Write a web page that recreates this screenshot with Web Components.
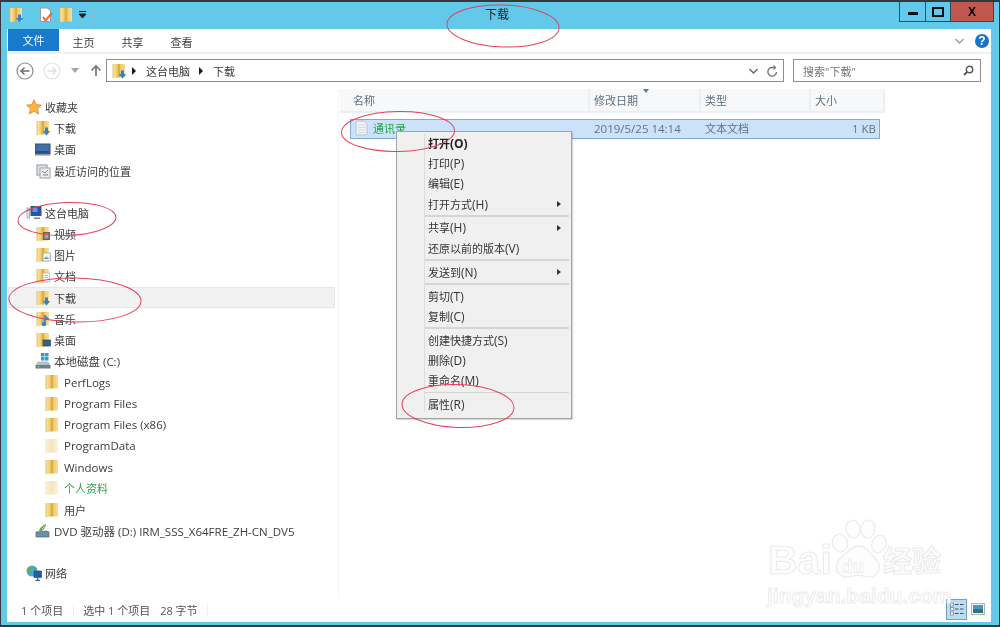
<!DOCTYPE html>
<html lang="zh-CN">
<head>
<meta charset="utf-8">
<title>下载</title>
<style>
  html, body { margin: 0; height: 100%; overflow: hidden; background: #63c9ea; }
  body { font: 11px "Open Sans", "Noto Sans CJK SC", sans-serif; color: #3c3c3c; }
</style>
</head>
<body>

<x-window>
  <x-titlebar slot="title">下载</x-titlebar>
  <x-ribbon slot="ribbon"></x-ribbon>
  <x-addressbar slot="address"></x-addressbar>

  <x-navpane slot="nav">
    <x-nav-item icon="star">收藏夹</x-nav-item>
    <x-nav-item level="1" icon="download">下载</x-nav-item>
    <x-nav-item level="1" icon="desktop">桌面</x-nav-item>
    <x-nav-item level="1" icon="recent">最近访问的位置</x-nav-item>
    <x-nav-item></x-nav-item>
    <x-nav-item icon="pc">这台电脑</x-nav-item>
    <x-nav-item level="1" icon="video">视频</x-nav-item>
    <x-nav-item level="1" icon="picture">图片</x-nav-item>
    <x-nav-item level="1" icon="doc">文档</x-nav-item>
    <x-nav-item level="1" icon="download" selected>下载</x-nav-item>
    <x-nav-item level="1" icon="music">音乐</x-nav-item>
    <x-nav-item level="1" icon="deskfolder">桌面</x-nav-item>
    <x-nav-item level="1" icon="disk" latin>本地磁盘 (C:)</x-nav-item>
    <x-nav-item level="2" icon="folder" latin>PerfLogs</x-nav-item>
    <x-nav-item level="2" icon="folder" latin>Program Files</x-nav-item>
    <x-nav-item level="2" icon="folder" latin>Program Files (x86)</x-nav-item>
    <x-nav-item level="2" icon="paler" latin>ProgramData</x-nav-item>
    <x-nav-item level="2" icon="folder" latin>Windows</x-nav-item>
    <x-nav-item level="2" icon="paler" green>个人资料</x-nav-item>
    <x-nav-item level="2" icon="folder">用户</x-nav-item>
    <x-nav-item level="1" icon="dvd" latin>DVD 驱动器 (D:) IRM_SSS_X64FRE_ZH-CN_DV5</x-nav-item>
    <x-nav-item></x-nav-item>
    <x-nav-item icon="net">网络</x-nav-item>
  </x-navpane>

  <x-filelist slot="files"></x-filelist>
  <x-statusbar slot="status"></x-statusbar>
</x-window>

<script>
const FOLDER = (pale = false, extra = '') => `
  <defs><linearGradient id="f" x1="0" x2="1" y1="0" y2="0">
    ${pale
      ? '<stop offset="0" stop-color="#faf2d8"/><stop offset=".5" stop-color="#f3e6bd"/><stop offset="1" stop-color="#fbf4de"/>'
      : '<stop offset="0" stop-color="#f9e9b0"/><stop offset=".3" stop-color="#f2cf72"/><stop offset=".52" stop-color="#d7a436"/><stop offset=".62" stop-color="#f0c965"/><stop offset="1" stop-color="#f8e199"/>'}
  </linearGradient></defs>
  <path d="M2 1h12v13.500H8L2 15z" fill="url(#f)"/>
  <path d="M2 15.300V1" stroke="${pale ? '#eee2bd' : '#dcb354'}" stroke-width=".8"/>
  ${extra}`;

const ICONS = {
  folder: FOLDER(),
  paler: FOLDER(true),
  download: FOLDER(false, '<path d="M10 7.500h3v3.500h2.200L11.500 15.500 7.800 11H10z" fill="#2d84d2"/>'),
  video: FOLDER(false, '<rect x="8" y="6" width="7" height="8" fill="#5b6670"/><rect x="9.500" y="7.500" width="4" height="5" fill="#9aa7b2"/>'),
  picture: FOLDER(false, '<rect x="8" y="6" width="7.500" height="8" fill="#eef3f6" stroke="#8fa0ac" stroke-width=".7"/><path d="M9 12l2-2.500 3.500 2.500z" fill="#5b9f90"/>'),
  doc: FOLDER(false, '<rect x="8" y="5" width="6.500" height="9" fill="#f3f7fa" stroke="#a9b7c2" stroke-width=".7"/><path d="M9.500 7.500h3.500M9.500 9.500h3.500" stroke="#8cb3d3" stroke-width=".8"/>'),
  music: FOLDER(false, '<path d="M10 4v9" stroke="#2d84d2" stroke-width="1.600"/><circle cx="9" cy="13" r="2.200" fill="#2d84d2"/><path d="M10.500 4.500l4 3.500-4 1.500z" fill="#2d84d2"/>'),
  deskfolder: FOLDER(false, '<rect x="8" y="8" width="7.500" height="6" fill="#2a6296" stroke="#364b5f" stroke-width=".7"/>'),
  star: `<path d="M8 .8l2.200 4.800 5.200.6-3.900 3.500 1.100 5.200L8 12.300l-4.600 2.600 1.100-5.200L.6 6.200l5.200-.6z" fill="#f8b63c" stroke="#e9863a" stroke-width=".9"/>`,
  desktop: `<rect x="0" y="3" width="15" height="10" fill="#3f6fae" stroke="#384b63"/><rect x="1" y="10" width="13" height="2" fill="#2a4f80"/><path d="M0 14h15" stroke="#7a8b9c"/>`,
  recent: `<rect x="2" y="2" width="10" height="10" fill="#dfe4e8" stroke="#8c969e"/><rect x="5" y="5" width="10" height="10" fill="#eef0f2" stroke="#9aa3aa"/><path d="M7 8l3 2 3-3M8 12h5" stroke="#75828c" fill="none"/>`,
  pc: `<rect x="5" y="1.500" width="10" height="9" fill="#1d55b0" stroke="#40566c"/><rect x="6.500" y="3" width="5" height="4" fill="#5e97dd"/><path d="M8 12.500h6v1.500H8z" fill="#73818c"/><rect x="1" y="3" width="2.500" height="10" fill="#e3e6e8" stroke="#8a959d" stroke-width=".7"/><path d="M1.500 5h1.500" stroke="#3ea860"/>`,
  disk: `<rect x="6" y="0" width="3.500" height="3.500" fill="#29a0dc"/><rect x="10" y="0" width="3.500" height="3.500" fill="#29a0dc"/><rect x="6" y="4" width="3.500" height="3.500" fill="#29a0dc"/><rect x="10" y="4" width="3.500" height="3.500" fill="#29a0dc"/><path d="M3 8.500h10l2.500 3.500H.5z" fill="#b6c0c7"/><rect x=".5" y="12" width="15" height="3.500" fill="#6f7f88"/><path d="M2 13.700h3" stroke="#49d47a"/>`,
  dvd: `<path d="M1 9l10-1 3 1v5H1z" fill="#6b8fa8" stroke="#50646f" stroke-width=".7"/><path d="M4 8c1-4 5-6 7-7 0 3-2 6-5 7z" fill="#49ad48"/><path d="M7 6c1-1 2-2 3-2.500" stroke="#d7efc8" fill="none"/>`,
  net: `<circle cx="6" cy="6" r="5.500" fill="#4aa6dc"/><path d="M2 3c2 0 3 1 3 2.500S3 8 2.500 9M7 1c1 2 3 2 4 3-1 2-3 1-3.500 3" fill="#5cb04a" stroke="#5cb04a"/><rect x="8" y="6" width="7.500" height="6.500" fill="#1f5cb3" stroke="#3a4d60" stroke-width=".7"/><path d="M11.700 12.500v2.500M9.500 15.300h4.500" stroke="#50606c" stroke-width="1.200"/>`
};

// small helper so every part gets its own shadow root from a string
class ShadowEl extends HTMLElement {
  constructor() {
    super();
    this.attachShadow({mode: "open"});
  }
  connectedCallback() {
    this.shadowRoot.innerHTML = this.render();
  }
}

class XIcon extends ShadowEl {
  render() {
    const s = this.getAttribute("size") || 16;
    return `<style>:host{display:inline-block;width:${s}px;height:${s}px;flex:none}svg{display:block}</style>
      <svg width="${s}" height="${s}" viewBox="0 0 16 16">${ICONS[this.getAttribute("name")] || ""}</svg>`;
  }
}

class XWindow extends ShadowEl {
  render() {
    return `<style>
      :host { display: block; position: relative; width: 1000px; height: 627px; box-sizing: border-box;
        background: #63c9ea; border: solid #34393c; border-width: 2px 1px 2px 1px; filter: blur(.4px); }
      .shell { display: flex; flex-direction: column; height: 100%; }
      .client { flex: 1; display: flex; flex-direction: column; min-height: 0; margin: 0 8px 0 6px; background: #fff; }
      .middle { flex: 1; display: flex; min-height: 0; }
      .bottom { height: 3px; flex: none; }
    </style>
    <div class="shell">
      <slot name="title"></slot>
      <div class="client">
        <slot name="ribbon"></slot>
        <slot name="address"></slot>
        <div class="middle"><slot name="nav"></slot><slot name="files"></slot></div>
        <slot name="status"></slot>
      </div>
      <div class="bottom"></div>
    </div>
    <x-menu></x-menu>
    <x-watermark></x-watermark>
    <x-annotations></x-annotations>`;
  }
}

class XTitlebar extends ShadowEl {
  render() {
    return `<style>
      :host { display: block; height: 27px; flex: none; position: relative; }
      .bar { display: flex; align-items: flex-start; height: 100%; padding-left: 7px; }
      .qa { display: flex; align-items: center; height: 26px; }
      .sep { width: 1px; height: 11px; background: #8db9c9; }
      .title { position: absolute; left: 446px; width: 100px; text-align: center; top: 4px; font-size: 12px; color: #222; line-height: 18px; }
      .btns { margin-left: auto; margin-right: 5px; display: flex; height: 20px; border: 1px solid #2f4b58; border-top: 0; box-sizing: border-box; }
      .btns div { display: flex; align-items: center; justify-content: center; border-left: 1px solid #2f4b58; width: 24px; }
      .btns div:first-child { border-left: 0; width: 25px; }
      .btns .close { width: 42px; background: #c0584f; font: bold 12px "Liberation Sans", sans-serif; color: #000; }
      i { display: block; }
      .min { width: 10px; height: 3px; background: #111; margin-top: 4px; }
      .max { width: 8px; height: 6px; border: 2px solid #111; }
    </style>
    <div class="bar">
      <div class="qa">
        <x-icon name="download"></x-icon>
        <span class="sep" style="margin-left:5px"></span>
        <svg style="margin-left:9px" width="15" height="16" viewBox="0 0 15 16"><path d="M1.500 1h7l3 3v10.500h-10z" fill="#fff" stroke="#9b9b9b"/><path d="M4 10l2.500 3.500L13 6" stroke="#e8673f" stroke-width="2" fill="none"/></svg>
        <x-icon name="folder" style="margin-left:4px"></x-icon>
        <svg style="margin-left:4px" width="9" height="8" viewBox="0 0 9 8"><path d="M1 .5h7M1 3h7L4.500 7z" stroke="#222" fill="#222"/></svg>
        <span class="sep" style="margin-left:7px"></span>
      </div>
      <div class="title"><slot></slot></div>
      <div class="btns">
        <div><i class="min"></i></div>
        <div><i class="max"></i></div>
        <div class="close">X</div>
      </div>
    </div>`;
  }
}

class XRibbon extends ShadowEl {
  render() {
    return `<style>
      :host { display: block; flex: none; height: 23px; border-bottom: 2px solid #f0f0f0; }
      .tabs { display: flex; height: 100%; align-items: stretch; padding-left: 1px; }
      .file { width: 51px; height: 22px; background: #1979ca; color: #fff; display: flex; align-items: center; justify-content: center; }
      .tab { width: 49px; display: flex; align-items: center; justify-content: center; padding-top: 2px; box-sizing: border-box; }
      .right { margin-left: auto; display: flex; align-items: center; gap: 11px; padding-right: 2px; }
      .help { width: 14px; height: 14px; border-radius: 50%; background: #1a74c6; color: #fff; font: bold 12px/14px "Liberation Sans", sans-serif; text-align: center; }
    </style>
    <div class="tabs">
      <div class="file">文件</div>
      <div class="tab">主页</div>
      <div class="tab">共享</div>
      <div class="tab">查看</div>
      <div class="right">
        <svg width="9" height="6" viewBox="0 0 9 6"><path d="M.5 1l4 4 4-4" fill="none" stroke="#9a9a9a" stroke-width="1.300"/></svg>
        <div class="help">?</div>
      </div>
    </div>`;
  }
}

class XAddressbar extends ShadowEl {
  render() {
    return `<style>
      :host { display: block; flex: none; padding-top: 5px; box-sizing: border-box; height: 35px; }
      .row { display: flex; align-items: center; height: 23px; }
      .nav { width: 99px; flex: none; display: flex; align-items: center; padding-left: 9px; box-sizing: border-box; }
      .nav svg { display: block; }
      .box { height: 23px; box-sizing: border-box; border: 1px solid #8e8e8e; display: flex; align-items: center; background: #fff; }
      .path { width: 678px; margin-right: 9px; padding-left: 4px; }
      .arrow { width: 0; height: 0; border: 4px solid transparent; border-left: 4px solid #1a1a1a; border-right: 0; }
      .end { margin-left: auto; display: flex; align-items: center; gap: 9px; padding-right: 5px; }
      .search { width: 188px; padding: 0 6px 0 9px; color: #777; }
      .search svg { margin-left: auto; }
    </style>
    <div class="row">
      <div class="nav">
        <svg width="18" height="18" viewBox="0 0 18 18"><circle cx="9" cy="9" r="8" fill="#fff" stroke="#8c8c8c" stroke-width="1.200"/><path d="M13.500 9h-8M8.500 5.500L5 9l3.500 3.500" fill="none" stroke="#707070" stroke-width="1.500"/></svg>
        <svg style="margin-left:9px" width="18" height="18" viewBox="0 0 18 18"><circle cx="9" cy="9" r="8" fill="#fff" stroke="#e2e2e2" stroke-width="1.200"/><path d="M4.500 9h8M9.500 5.500L13 9l-3.500 3.500" fill="none" stroke="#e0e0e0" stroke-width="1.500"/></svg>
        <svg style="margin-left:10px" width="8" height="5" viewBox="0 0 8 5"><path d="M0 0h8L4 5z" fill="#a5a5a5"/></svg>
        <svg style="margin-left:11px" width="12" height="13" viewBox="0 0 12 13"><path d="M6 12V2M1.500 6.500L6 2l4.500 4.500" fill="none" stroke="#777" stroke-width="1.700"/></svg>
      </div>
      <div class="box path">
        <x-icon name="download"></x-icon>
        <span class="arrow" style="margin-left:5px"></span><span style="margin-left:10px">这台电脑</span>
        <span class="arrow" style="margin-left:9px"></span><span style="margin-left:10px">下载</span>
        <div class="end">
          <svg width="9" height="6" viewBox="0 0 9 6"><path d="M.5 1l4 4 4-4" fill="none" stroke="#666" stroke-width="1.400"/></svg>
          <svg width="11" height="12" viewBox="0 0 11 12"><path d="M9.500 7A4.300 4.300 0 1 1 5.500 2.500H8" fill="none" stroke="#777" stroke-width="1.400"/><path d="M6.500 0L9.500 2.500 6.500 5z" fill="#777"/></svg>
        </div>
      </div>
      <div class="box search">搜索"下载"
        <svg width="11" height="11" viewBox="0 0 11 11"><circle cx="6.500" cy="4.500" r="3.200" fill="none" stroke="#555" stroke-width="1.400"/><path d="M4 7L1 10" stroke="#555" stroke-width="1.800"/></svg>
      </div>
    </div>`;
  }
}

class XNavpane extends ShadowEl {
  render() {
    return `<style>
      :host { display: block; width: 331px; flex: none; padding-top: 7.4px; box-sizing: border-box; padding-left: 1px; }
    </style><slot></slot>`;
  }
}

class XNavItem extends ShadowEl {
  render() {
    const level = +this.getAttribute("level") || 0;
    const icon = this.getAttribute("icon");
    const left = [18, 27, 36][level];
    const gap = [3, 3, 4][level];
    return `<style>
      :host { display: flex; height: 21.2px; align-items: center; white-space: nowrap; box-sizing: border-box; padding-left: ${left}px; gap: ${gap}px; }
      :host([selected]) { background: #f2f2f2; box-shadow: inset 0 0 0 1px #e6e6e6; margin-right: 3px; }
      :host([green]) { color: #2ea84a; }
      :host([latin]) { font-size: 11.5px; }
    </style>${icon ? `<x-icon name="${icon}"></x-icon>` : ""}<slot></slot>`;
  }
}

class XFilelist extends ShadowEl {
  render() {
    return `<style>
      :host { display: block; flex: 1; padding-left: 1px; min-width: 0; position: relative; border-left: 1px solid #f6f6f6; }
      .cols { display: grid; grid-template-columns: 250px 111px 110px 74px; width: 545px; height: 24px; position: relative; }
      .cols div { background: #f7f8f9; border-right: 2px solid #eeeeee; border-bottom: 2px solid #eeeeee; box-sizing: border-box; padding-left: 4px; display: flex; align-items: center; color: #5f6f7c; }
      .cols div:first-child { padding-left: 13px; }
      .sort { position: absolute; left: 303px; top: 0; width: 0; height: 0; border: 3.500px solid transparent; border-top: 4px solid #5f7a90; border-bottom: 0; }
      .row { display: grid; grid-template-columns: 239px 111px 110px 68px; margin: 6px 0 0 10px; width: 530px; height: 20px; padding-bottom: 2px; box-sizing: border-box; background: #cce2fb; border: 1px solid #84a9d3; align-items: center; color: #66727c; }
      .name { display: flex; align-items: center; gap: 4px; padding-left: 3px; color: #27a448; }
      .size { text-align: right; padding-right: 3px; font-size: 11.5px; }
      .row .date { padding-left: 4px; font-size: 11.5px; }
      .row .type { padding-left: 4px; }
    </style>
    <div class="cols">
      <div>名称</div><div>修改日期</div><div>类型</div><div>大小</div>
      <span class="sort"></span>
    </div>
    <div class="row">
      <span class="name">
        <svg width="15" height="16" viewBox="0 0 15 16"><path d="M2 1h8l3 3v11H2z" fill="#eef2f5" stroke="#b9c4cc"/><path d="M4 5h7M4 7.500h7M4 10h7M4 12.500h7" stroke="#d4dbe1"/></svg>
        通讯录
      </span>
      <span class="date">2019/5/25 14:14</span>
      <span class="type">文本文档</span>
      <span class="size">1 KB</span>
    </div>`;
  }
}

class XMenu extends ShadowEl {
  render() {
    return `<style>
      :host { position: absolute; left: 395px; top: 129px; width: 176px; height: 288px; box-sizing: border-box;
        background: #f0f0f0; border: 1px solid #a3a3a3; box-shadow: 1px 1px 1px rgba(0,0,0,.15); color: #333; padding: 1px 2px 0 0; }
      .rail { position: absolute; left: 27px; top: 2px; bottom: 6px; width: 1px; background: #dcdcdc; }
      b { font-weight: inherit; font-size: 12px; }
    </style><div class="rail"></div>
    <x-menu-item bold>打开<b>(O)</b></x-menu-item>
    <x-menu-item>打印<b>(P)</b></x-menu-item>
    <x-menu-item>编辑<b>(E)</b></x-menu-item>
    <x-menu-item arrow>打开方式<b>(H)</b></x-menu-item>
    <x-menu-sep></x-menu-sep>
    <x-menu-item arrow>共享<b>(H)</b></x-menu-item>
    <x-menu-item>还原以前的版本<b>(V)</b></x-menu-item>
    <x-menu-sep></x-menu-sep>
    <x-menu-item arrow>发送到<b>(N)</b></x-menu-item>
    <x-menu-sep></x-menu-sep>
    <x-menu-item>剪切<b>(T)</b></x-menu-item>
    <x-menu-item>复制<b>(C)</b></x-menu-item>
    <x-menu-sep></x-menu-sep>
    <x-menu-item>创建快捷方式<b>(S)</b></x-menu-item>
    <x-menu-item>删除<b>(D)</b></x-menu-item>
    <x-menu-item>重命名<b>(M)</b></x-menu-item>
    <x-menu-sep></x-menu-sep>
    <x-menu-item>属性<b>(R)</b></x-menu-item>`;
  }
}

class XMenuItem extends ShadowEl {
  render() {
    return `<style>
      :host { display: flex; align-items: center; height: 20.3px; padding: 0 8px 0 31px; position: relative; }
      :host([bold]) { font-weight: 700; color: #222; }
      .t { display: block; white-space: nowrap; }
      .a { margin-left: auto; width: 0; height: 0; border: 3.500px solid transparent; border-left: 4px solid #333; border-right: 0; }
    </style><span class="t"><slot></slot></span>${this.hasAttribute("arrow") ? '<span class="a"></span>' : ""}`;
  }
}

class XMenuSep extends ShadowEl {
  render() {
    return `<style>
      :host { display: block; height: 3.600px; position: relative; }
      div { position: absolute; left: 28px; right: 0; top: 1px; height: 1.500px; background: #d5d5d5; }
    </style><div></div>`;
  }
}

class XStatusbar extends ShadowEl {
  render() {
    return `<style>
      :host { display: flex; align-items: center; flex: none; height: 24px; padding-left: 14px; color: #555; position: relative; }
      .s { width: 1px; height: 13px; background: #f0f0f0; }
      .views { position: absolute; left: 939px; top: 0; display: flex; gap: 4px; align-items: center; height: 22px; }
      .on { width: 21px; height: 21px; box-sizing: border-box; background: #bcdcf4; border: 1.500px solid #6e9fc4; display: flex; align-items: center; justify-content: center; }
    </style>
    <span>1 个项目</span>
    <span class="s" style="margin-left:10px"></span>
    <span style="margin-left:9px">选中 1 个项目</span>
    <span style="margin-left:10px">28 字节</span>
    <span class="s" style="margin-left:9px"></span>
    <div class="views">
      <div class="on">
        <svg width="14" height="14" viewBox="0 0 14 14"><g fill="#fff" stroke="#6f7c88" stroke-width=".7"><rect x=".5" y="1" width="3" height="3"/><rect x=".5" y="5.500" width="3" height="3"/><rect x=".5" y="10" width="3" height="3"/></g><path d="M5 2.500h3.500M10 2.500h3.500M5 7h3.500M10 7h3.500M5 11.500h3.500M10 11.500h3.500" stroke="#46525c"/></svg>
      </div>
      <svg width="14" height="14" viewBox="0 0 14 14"><rect x=".5" y="1.500" width="13" height="11" fill="#f2f6f8" stroke="#a6b4bf"/><rect x="2" y="3" width="10" height="4" fill="#4f93c6"/><path d="M2 7h10v4H2z" fill="#2f7a62"/></svg>
    </div>`;
  }
}

class XWatermark extends ShadowEl {
  render() {
    return `<style>
      :host { position: absolute; left: 766px; top: 516px; width: 190px; height: 92px; pointer-events: none; }
      span { position: absolute; white-space: nowrap; color: #fdfdfd; -webkit-text-stroke: 1.200px #ececec; }
      .b { font: 700 41px/40px "Liberation Sans", sans-serif; left: 1px; top: 22px; }
      .du { font: 700 19px/20px "Liberation Sans", sans-serif; left: 74px; top: 39px; -webkit-text-stroke-width: .8px; }
      .cn { font: 700 29px/34px "Noto Sans CJK SC", sans-serif; left: 116px; top: 24px; letter-spacing: 0; }
      .url { font: 700 21px/24px "Liberation Sans", sans-serif; left: 0; top: 66px; -webkit-text-stroke-width: 1px; }
      svg { position: absolute; left: 60px; top: 1px; }
    </style>
    <svg width="64" height="64" viewBox="0 0 64 64" fill="#fdfdfd" stroke="#ececec" stroke-width="1.300">
      <ellipse cx="13" cy="24" rx="7.500" ry="9" transform="rotate(-20 13 24)"/>
      <ellipse cx="26" cy="10" rx="7" ry="9" transform="rotate(-8 26 10)"/>
      <ellipse cx="41" cy="10" rx="7" ry="9" transform="rotate(10 41 10)"/>
      <ellipse cx="52" cy="25" rx="7" ry="9" transform="rotate(25 52 25)"/>
      <path d="M32 27c7 0 10 6 15 11 5 5 7 9 4 15-3 5-9 6-14 4-4-1-7-1-11 0-6 2-13 1-16-5-2-6 0-10 5-14 5-4 9-11 17-11z"/>
    </svg>
    <span class="b">Bai</span><span class="du">du</span><span class="cn">经验</span>
    <span class="url">jingyan.baidu.com</span>`;
  }
}

class XAnnotations extends ShadowEl {
  render() {
    return `<style>
      :host { position: absolute; left: -1px; top: -2px; width: 1000px; height: 627px; pointer-events: none; }
      svg { display: block; }
      ellipse { fill: none; stroke: #e8405c; stroke-width: 1; }
    </style>
    <svg width="1000" height="627">
      <ellipse cx="503" cy="26" rx="56" ry="21" transform="rotate(2 503 26)"/>
      <ellipse cx="398" cy="131.500" rx="56.500" ry="20" transform="rotate(-1 398 131)"/>
      <ellipse cx="67" cy="219" rx="49" ry="16.500" transform="rotate(-2 67 219)"/>
      <ellipse cx="75" cy="300" rx="66" ry="22" transform="rotate(1 75 300)"/>
      <ellipse cx="458" cy="406" rx="56" ry="21.500" transform="rotate(2 458 406)"/>
    </svg>`;
  }
}

const TAGS = {
  "x-icon": XIcon, "x-titlebar": XTitlebar, "x-ribbon": XRibbon, "x-addressbar": XAddressbar,
  "x-navpane": XNavpane, "x-nav-item": XNavItem, "x-filelist": XFilelist, "x-menu": XMenu,
  "x-menu-item": XMenuItem, "x-menu-sep": XMenuSep, "x-statusbar": XStatusbar,
  "x-watermark": XWatermark, "x-annotations": XAnnotations, "x-window": XWindow
};
Object.keys(TAGS).forEach(t => customElements.define(t, TAGS[t]));
</script>
</body>
</html>
